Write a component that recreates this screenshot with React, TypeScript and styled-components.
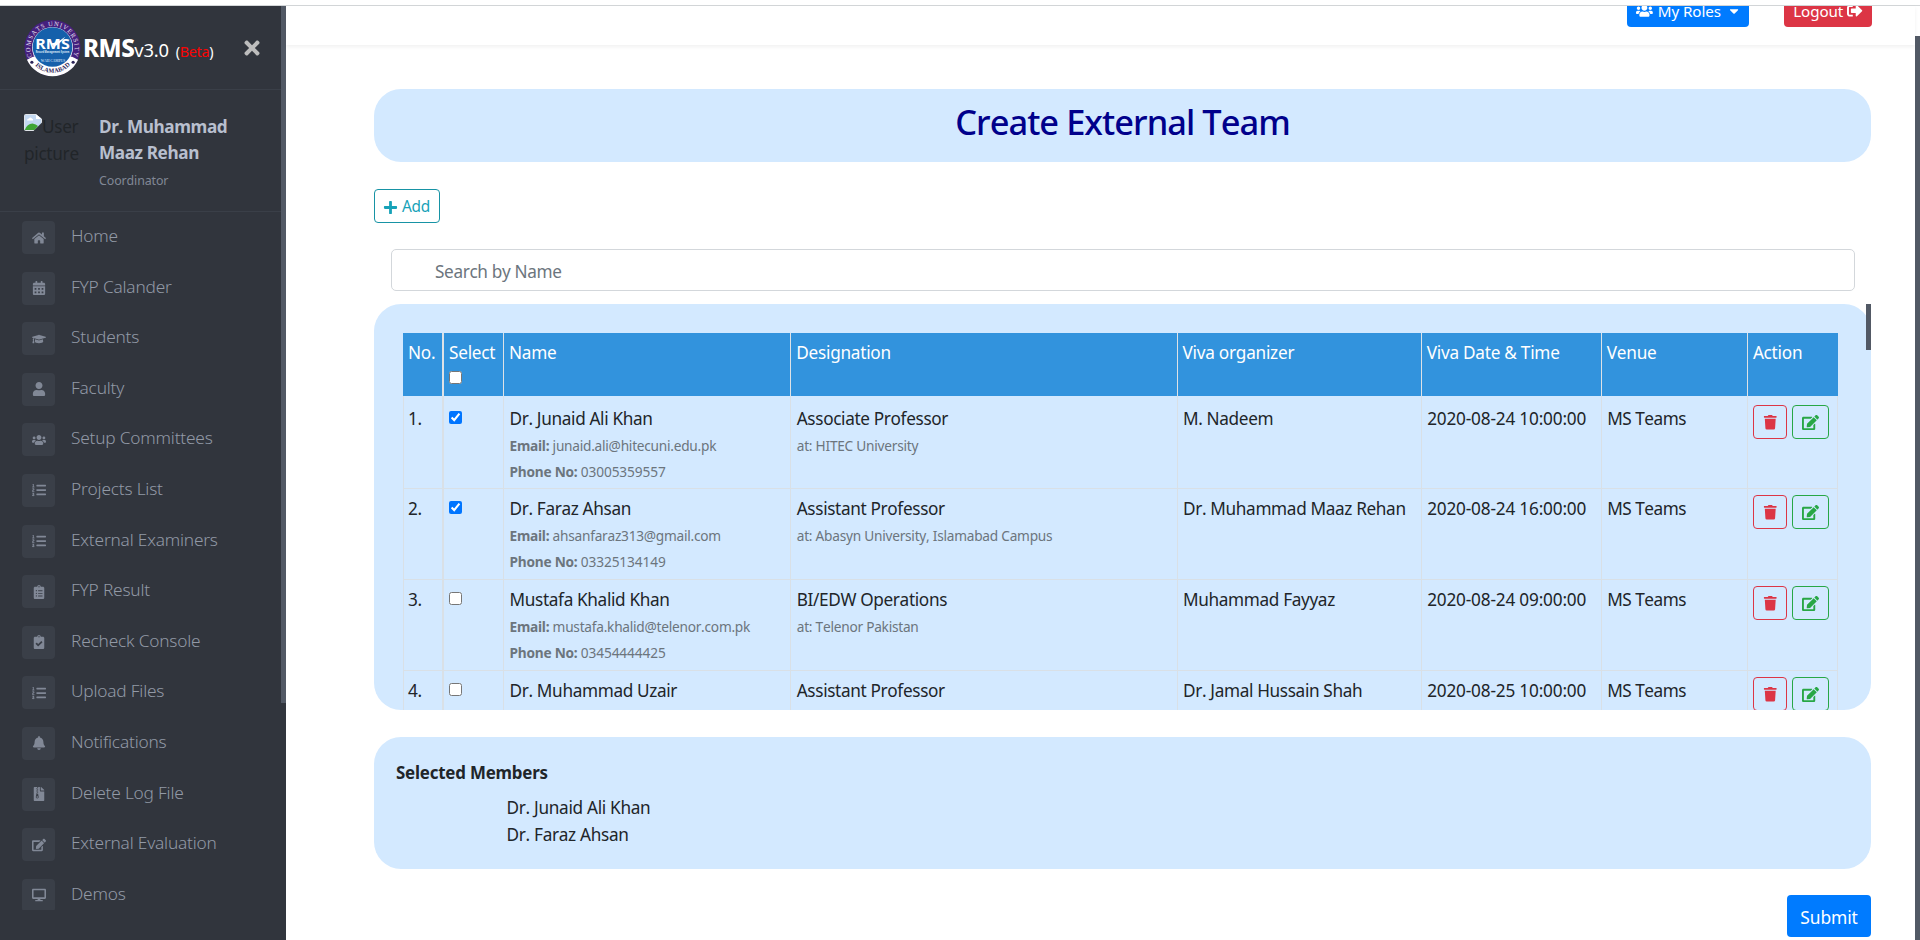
import React from "react";
import styled, { createGlobalStyle, css } from "styled-components";
import {
  FaHome, FaCalendarAlt, FaGraduationCap, FaUser, FaUsers, FaListOl, FaClipboardList,
  FaClipboardCheck, FaBell, FaFileArchive, FaEdit, FaDesktop, FaTimes, FaPlus, FaTrash,
  FaSignOutAlt, FaCaretDown,
} from "react-icons/fa";

const Global = createGlobalStyle`
  * { box-sizing: border-box; }
  html, body { margin: 0; height: 100%; overflow: hidden; background: #fff; }
  body {
    font-family: "Noto Sans", "Open Sans", sans-serif;
    font-size: 17.2px; font-weight: 400; line-height: 26.4px; letter-spacing: -0.35px;
    font-kerning: none; color: #212529;
  }
  svg { display: block; }
`;

/* ---------- frame ---------- */

const Frame = styled.div`
  width: 1920px; height: 940px; padding-top: 5px;
  display: flex; flex-direction: column; overflow: hidden;
`;
const Viewport = styled.div`
  flex: 1; min-height: 0; display: flex; border-top: 1px solid #d3d6d8;
`;
const Thumb = styled.div<{ $h?: number; $top?: number }>`
  width: 5px; flex: none; height: ${p => (p.$h ? p.$h + "px" : "auto")};
  margin-top: ${p => p.$top || 0}px; background: #525965;
`;

/* ---------- sidebar ---------- */

const Sidebar = styled.aside`
  width: 286px; flex: none; display: flex; background: #31353d;
`;
const SideScroll = styled.div`
  width: 281px; flex: none; display: flex; flex-direction: column;
`;
const Brand = styled.div`
  height: 84px; padding: 0 18px 0 24px; display: flex; align-items: center;
  border-bottom: 1px solid #3a3f48;
`;
const BrandText = styled.div`
  flex: 1; margin: 5px 0 0 2px; display: flex; align-items: baseline; color: #fff; white-space: pre;
`;
const BrandName = styled.span`font-size: 24.2px; font-weight: 800; letter-spacing: -0.5px;`;
const BrandVersion = styled.span`font-size: 18.4px; letter-spacing: -0.2px;`;
const BrandTag = styled.span`
  font-size: 14.4px; letter-spacing: -0.3px;
  em { color: #fb0404; font-style: normal; }
`;
const Close = styled.span`color: #bdbdbd; font-size: 22px;`;

const Profile = styled.div`
  height: 122px; padding: 22px 24px 0; display: flex; border-bottom: 1px solid #3a3f48;
`;
const Avatar = styled.div`
  width: 58px; height: 66px; flex: none; overflow: hidden; display: flex; flex-wrap: wrap;
  color: #212529; align-content: flex-start; padding-top: 1px; letter-spacing: -0.3px;
  svg { margin-top: 1px; }
  span { line-height: 27px; }
`;
const ProfileInfo = styled.div`
  margin: 2px 0 0 17px; display: flex; flex-direction: column;
`;
const ProfileName = styled.strong`
  width: 150px; font-weight: 700; color: #b8bfce; letter-spacing: -0.4px; font-size: 17.2px;
`;
const Role = styled.span`
  margin-top: 1px; font-size: 12.4px; color: #818896; letter-spacing: -0.1px;
`;

const Menu = styled.ul`
  margin: 0; padding: 9px 0 0 22px; list-style: none; height: 698px; overflow: hidden;
`;
const MenuItem = styled.li`
  height: 50.6px; display: flex; align-items: flex-start; color: #818896;
  font-size: 17.3px; font-weight: 300; letter-spacing: -0.2px;
`;
const MenuIcon = styled.span`
  width: 33px; height: 33px; margin-right: 16px; border-radius: 4px; background: #3a3f48;
  display: flex; align-items: center; justify-content: center; font-size: 14px;
`;
const MenuLabel = styled.span`margin-top: 2px; color: #9299a6;`;

/* ---------- main column ---------- */

const Main = styled.main`
  flex: 1; min-width: 0; display: flex; flex-direction: column; background: #fff;
`;
const TopBar = styled.header`
  height: 39px; padding-right: 43px; flex: none; display: flex; justify-content: flex-end;
  align-items: flex-start; gap: 35px; box-shadow: 0 2px 4px rgba(0, 0, 0, 0.06); overflow: hidden;
`;
const Button = styled.button<{ $bg: string; $w: number }>`
  width: ${p => p.$w}px; height: 34px; margin-top: -13px; padding: 2px 9px 0; border: 0; flex: none;
  border-radius: 4px; background: ${p => p.$bg}; color: #fff; font: inherit; font-size: 15.2px;
  letter-spacing: -0.1px; display: flex; align-items: center; justify-content: center;
  gap: 5px; white-space: nowrap;
  svg:last-child { margin-left: ${p => (p.$w > 100 ? 2 : -1)}px; }
`;
const Submit = styled(Button)`
  height: 42px; margin: 26px 0 0; align-self: flex-end; font-size: 17.4px;
`;

const Content = styled.div`
  width: 1497px; margin: 44px 0 0 88px; display: flex; flex-direction: column;
`;
const panel = css`background: #d3e9ff; border-radius: 27px;`;
const Title = styled.h2`
  ${panel} margin: 0; height: 73px; padding-bottom: 6px; color: #00008b; font-size: 34.4px;
  font-weight: 500; letter-spacing: -0.95px; display: flex; align-items: center; justify-content: center;
`;
const AddButton = styled.button`
  width: 66px; height: 34px; margin-top: 27px; padding: 2px 1px 0 0; border: 1px solid #1793a5;
  border-radius: 4px; background: #fff; color: #17a2b8; font: inherit; font-size: 15.4px;
  letter-spacing: -0.3px; display: flex; align-items: center; justify-content: center; gap: 4px;
`;
const Search = styled.input`
  height: 42px; margin: 26px 16px 0 17px; padding: 3px 43px 0; border: 1px solid #d3d7db;
  border-radius: 5px; outline: 0; font: inherit; letter-spacing: -0.35px; background: #fff;
  &::placeholder { color: #6c757d; opacity: 1; }
`;

/* ---------- examiner table ---------- */

const TableCard = styled.section`
  ${panel} height: 406px; margin-top: 13px; padding: 29px 0 0 29px; overflow: hidden;
`;
const TableWrap = styled.div`
  position: relative; display: flex; flex-direction: column;
`;
const CardThumb = styled.div`
  position: absolute; right: 0; top: 13px; width: 5px; height: 46px; background: #525965;
`;
const Table = styled.table`
  width: 1435px; table-layout: fixed; border-collapse: separate; border-spacing: 0;
`;
const Check = styled.input.attrs({ type: "checkbox", readOnly: true })`
  display: block; width: 13px; height: 13px; margin: 5px 0 0 -0.5px;
`;
const Th = styled.th`
  height: 63px; padding: 6.5px 5px 0; background: #3293dd; color: #fff; text-align: left;
  vertical-align: top; font-weight: 450; font-size: 17.2px; letter-spacing: -0.25px;
  border-right: 1px solid #dee2e6; white-space: nowrap;
  &:first-child { border-right-width: 2px; }
  &:last-child { border-right-color: #3293dd; }
`;
const Td = styled.td<{ $first?: boolean; $spacing?: number }>`
  height: ${p => (p.$first ? 92.5 : 91)}px; padding: ${p => (p.$first ? 9.5 : 7)}px 5px 0 5.5px;
  vertical-align: top; letter-spacing: ${p => p.$spacing ?? -0.35}px; white-space: nowrap;
  border-right: 1px solid #d9e0e6; border-bottom: 1px solid #d9e0e6;
  &:first-child { border-left: 1px solid #d9e0e6; padding-left: 4px; border-right-width: 2px; }
`;
const Muted = styled.div`
  font-size: 13.7px; color: #6c757d; letter-spacing: -0.25px; line-height: 26px;
  b { font-weight: 700; letter-spacing: -0.25px; }
  &:first-of-type { margin-top: 1.5px; }
`;
const Phone = styled.span`letter-spacing: -0.1px;`;
const Actions = styled.div`display: flex; gap: 5px; margin: -1px 0 0 -0.5px;`;
const IconButton = styled.button<{ $c: string; $w: number }>`
  width: ${p => p.$w}px; height: 34px; padding: 2px 0 0; border: 1px solid ${p => p.$c};
  border-radius: 4px; background: transparent; color: ${p => p.$c}; display: flex;
  align-items: center; justify-content: center;
`;

/* ---------- selected members ---------- */

const Selected = styled.section`
  ${panel} height: 132px; margin-top: 27px; padding: 23px 22px 0;
`;
const SelectedTitle = styled.strong`
  display: block; font-weight: 700; font-size: 16.9px; letter-spacing: -0.2px;
`;
const SelectedList = styled.div`
  margin: 9px 0 0 110.5px; display: flex; flex-direction: column; letter-spacing: -0.3px;
`;

/* ---------- drawings ---------- */

const Logo = () => (
  <svg width="57" height="58" viewBox="0 0 58 58" overflow="visible">
    <defs>
      <path id="ringTop" d="M 8.2 38 A 22.6 22.6 0 1 1 49.8 38" />
      <path id="ringBottom" d="M 8 43 A 25.4 25.4 0 0 0 50 43" />
    </defs>
    <circle cx="29" cy="29" r="28.5" fill="#45207e" />
    <path d="M3 41 A 28.5 28.5 0 0 0 55 41 L 49 38 L 9 38 Z" fill="#fff" />
    <circle cx="29" cy="28.5" r="20.8" fill="#fff" />
    <circle cx="29" cy="28" r="20.2" fill="#1560ab" />
    <text fontSize="6.6" fill="#e6e0f0" fontFamily="Liberation Serif, serif" letterSpacing="0">
      <textPath href="#ringTop" textLength="88">COMSATS UNIVERSITY</textPath>
    </text>
    <text fontSize="6.4" fontWeight="700" fill="#2a2357" fontFamily="Liberation Serif, serif" letterSpacing="0">
      <textPath href="#ringBottom" startOffset="5" textLength="40">ISLAMABAD</textPath>
    </text>
    <circle cx="8" cy="43.5" r="1.6" fill="#2a2357" />
    <circle cx="50" cy="43.5" r="1.6" fill="#2a2357" />
    <text x="11.5" y="30" fontSize="14.5" fontWeight="700" fill="#fff" letterSpacing="0" textLength="35" lengthAdjust="spacingAndGlyphs">RMS</text>
    <path d="M27 24 Q32 25 42 17.5 Q35 27 30 27 Z" fill="#fff" />
    <text x="12" y="34.6" fontSize="3.4" fontWeight="700" fill="#dbe8f5" letterSpacing="0" textLength="34" lengthAdjust="spacingAndGlyphs">Record Management System</text>
    <text x="17" y="43.2" fontSize="3.8" fontWeight="600" fill="#b9d2ea" fontFamily="Liberation Serif, serif" letterSpacing="0" textLength="25" lengthAdjust="spacingAndGlyphs">WAH CAMPUS</text>
  </svg>
);

const BrokenImage = () => (
  <svg width="18" height="17" viewBox="0 0 18 17">
    <path d="M1.5 0.5 H12 L17.5 5 V10 L10 16.5 H1.5 Q0.5 16.5 0.5 15.5 V1.5 Q0.5 0.5 1.5 0.5Z" fill="#c3d8f2" stroke="#dfe3e8" />
    <path d="M12 0.5 V5 H17.5 Z" fill="#fff" />
    <path d="M3 6.5 Q3 4.5 5 4.5 Q6 2.5 8 4.5 Q9.5 5 9 6.5 Z" fill="#fff" />
    <path d="M1 15.5 Q3 10 8.5 9.5 Q12 10 14 12 L10.5 16 H1 Z" fill="#3fa535" />
    <path d="M9.5 17 L18 8.6 V11 L11.8 17 Z" fill="#31353d" />
  </svg>
);

/* ---------- data ---------- */

const menu = [
  [FaHome, "Home"], [FaCalendarAlt, "FYP Calander"], [FaGraduationCap, "Students"],
  [FaUser, "Faculty"], [FaUsers, "Setup Committees"], [FaListOl, "Projects List"],
  [FaListOl, "External Examiners"], [FaClipboardList, "FYP Result"],
  [FaClipboardCheck, "Recheck Console"], [FaListOl, "Upload Files"], [FaBell, "Notifications"],
  [FaFileArchive, "Delete Log File"], [FaEdit, "External Evaluation"], [FaDesktop, "Demos"],
] as const;

const columns = [
  ["No.", 41], ["Select", 60], ["Name", 287], ["Designation", 386], ["Viva organizer", 244],
  ["Viva Date & Time", 180], ["Venue", 146], ["Action", 90],
] as const;

const rows = [
  { name: "Dr. Junaid Ali Khan", email: "junaid.ali@hitecuni.edu.pk", phone: "03005359557", title: "Associate Professor", at: "HITEC University", by: "M. Nadeem", when: "2020-08-24 10:00:00", on: true },
  { name: "Dr. Faraz Ahsan", email: "ahsanfaraz313@gmail.com", phone: "03325134149", title: "Assistant Professor", at: "Abasyn University, Islamabad Campus", by: "Dr. Muhammad Maaz Rehan", when: "2020-08-24 16:00:00", on: true },
  { name: "Mustafa Khalid Khan", email: "mustafa.khalid@telenor.com.pk", phone: "03454444425", title: "BI/EDW Operations", at: "Telenor Pakistan", by: "Muhammad Fayyaz", when: "2020-08-24 09:00:00", on: false },
  { name: "Dr. Muhammad Uzair", email: "", phone: "", title: "Assistant Professor", at: "", by: "Dr. Jamal Hussain Shah", when: "2020-08-25 10:00:00", on: false },
];

export default function App() {
  return (
    <Frame>
      <Global />
      <Viewport>
        <Sidebar>
          <SideScroll>
            <Brand>
              <Logo />
              <BrandText>
                <BrandName>RMS</BrandName>
                <BrandVersion>v3.0</BrandVersion>
                <BrandTag>{"  "}(<em>Beta</em>)</BrandTag>
              </BrandText>
              <Close><FaTimes /></Close>
            </Brand>
            <Profile>
              <Avatar><BrokenImage /><span>User</span><span>picture</span></Avatar>
              <ProfileInfo>
                <ProfileName>Dr. Muhammad Maaz Rehan</ProfileName>
                <Role>Coordinator</Role>
              </ProfileInfo>
            </Profile>
            <Menu>
              {menu.map(([Icon, label]) => (
                <MenuItem key={label}>
                  <MenuIcon><Icon /></MenuIcon>
                  <MenuLabel>{label}</MenuLabel>
                </MenuItem>
              ))}
            </Menu>
          </SideScroll>
          <Thumb $h={697} />
        </Sidebar>
        <Main>
          <TopBar>
            <Button $bg="#007bff" $w={122}><FaUsers size={19.5} />My Roles <FaCaretDown size={14} /></Button>
            <Button $bg="#dc3545" $w={88}>Logout <FaSignOutAlt size={15.5} /></Button>
          </TopBar>
          <Content>
            <Title>Create External Team</Title>
            <AddButton><FaPlus size={15} />Add</AddButton>
            <Search placeholder="Search by Name" />
            <TableWrap>
              <TableCard>
                <Table>
                  <colgroup>{columns.map(([c, w]) => <col key={c} width={w} />)}</colgroup>
                  <thead>
                    <tr>
                      {columns.map(([c]) => (
                        <Th key={c}>{c}{c === "Select" && <Check checked={false} />}</Th>
                      ))}
                    </tr>
                  </thead>
                  <tbody>
                    {rows.map((r, i) => (
                      <tr key={r.name}>
                        <Td $first={i === 0}>{i + 1}.</Td>
                        <Td $first={i === 0}><Check checked={r.on} /></Td>
                        <Td $first={i === 0}>
                          {r.name}
                          {r.email && <Muted><b>Email:</b> {r.email}</Muted>}
                          {r.phone && <Muted><b>Phone No:</b> <Phone>{r.phone}</Phone></Muted>}
                        </Td>
                        <Td $first={i === 0}>{r.title}{r.at && <Muted>at: {r.at}</Muted>}</Td>
                        <Td $first={i === 0}>{r.by}</Td>
                        <Td $first={i === 0} $spacing={-0.18}>{r.when}</Td>
                        <Td $first={i === 0} $spacing={-0.5}>MS Teams</Td>
                        <Td $first={i === 0}>
                          <Actions>
                            <IconButton $c="#dc3545" $w={34}><FaTrash size={14.5} /></IconButton>
                            <IconButton $c="#28a745" $w={37}><FaEdit size={17} /></IconButton>
                          </Actions>
                        </Td>
                      </tr>
                    ))}
                  </tbody>
                </Table>
              </TableCard>
              <CardThumb />
            </TableWrap>
            <Selected>
              <SelectedTitle>Selected Members</SelectedTitle>
              <SelectedList>
                {rows.filter(r => r.on).map(r => <span key={r.name}>{r.name}</span>)}
              </SelectedList>
            </Selected>
            <Submit $bg="#007bff" $w={84}>Submit</Submit>
          </Content>
        </Main>
        <Thumb $top={30} />
      </Viewport>
    </Frame>
  );
}
